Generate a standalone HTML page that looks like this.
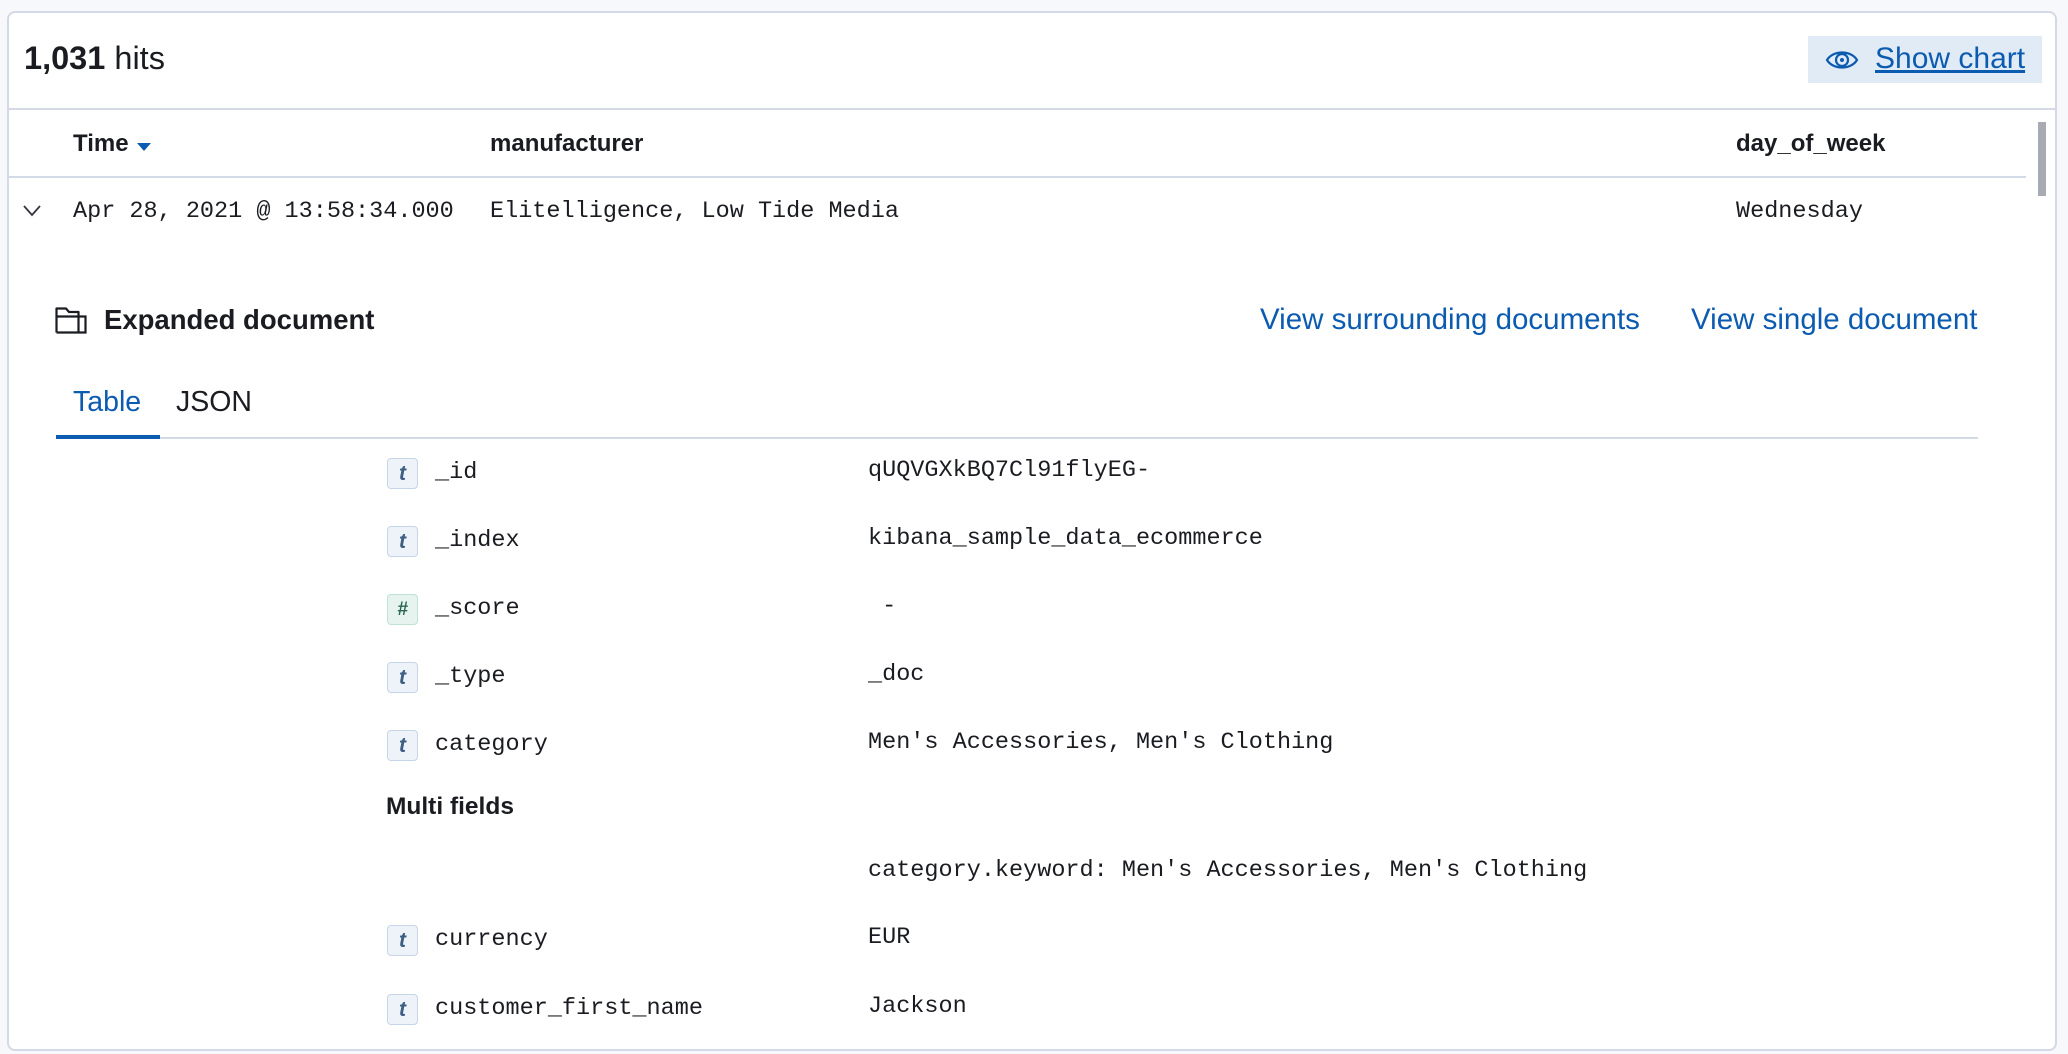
<!DOCTYPE html>
<html><head><meta charset="utf-8"><style>
html,body{margin:0;padding:0;}
body{width:2068px;height:1054px;background:#f7f8fc;position:relative;overflow:hidden;font-family:"Liberation Sans",sans-serif;color:#1a1c21;}
.panel{position:absolute;left:7px;top:11px;width:2050px;height:1040px;background:#fff;border:2px solid #d3dae6;border-radius:8px;box-sizing:border-box;}
.a{position:absolute;white-space:nowrap;}
.mono{font-family:"Liberation Mono",monospace;font-size:23.5px;color:#1a1c21;}
.hline{position:absolute;height:2px;background:#d3dae6;}
.badge{position:absolute;left:387px;width:29px;height:29px;border:1px solid #c6d6e8;background:#eef3f9;border-radius:4px;color:#3d5d83;font-weight:bold;font-style:italic;font-size:21px;text-align:center;line-height:29px;font-family:"Liberation Sans",sans-serif;}
.badge.n{border-color:#bfe2d3;background:#e6f3ee;color:#2c6650;font-size:19px;}
.link{color:#0b5bb0;font-size:29.5px;}
.th{font-size:24px;font-weight:bold;line-height:30px;top:129px;}
</style></head><body>
<div class="panel"></div>
<div class="a" style="left:24px;top:38px;font-size:32.5px;line-height:40px;"><b>1,031</b> hits</div>
<div class="a" style="left:1808px;top:36px;width:234px;height:47px;background:#e0ebf5;"></div>
<svg class="a" style="left:1825px;top:45px" width="34" height="30" viewBox="0 0 34 30"><path d="M2 15 C8 5,26 5,32 15 C26 25,8 25,2 15Z" fill="none" stroke="#0b5bb0" stroke-width="2.2"/><circle cx="17" cy="15" r="6" fill="none" stroke="#0b5bb0" stroke-width="2.2"/><circle cx="17" cy="15" r="2" fill="#0b5bb0"/></svg>
<div class="a link" style="left:1875px;top:40px;font-size:30px;line-height:38px;text-decoration:underline;">Show chart</div>
<div class="hline" style="left:9px;top:108px;width:2048px;"></div>
<div class="a th" style="left:73px;">Time</div>
<svg class="a" style="left:137px;top:143px" width="14" height="10"><path d="M0 0H14L7 8Z" fill="#0b5bb0"/></svg>
<div class="a th" style="left:490px;">manufacturer</div>
<div class="a th" style="left:1736px;">day_of_week</div>
<div class="a" style="left:2038px;top:122px;width:8px;height:74px;background:#a8abb3;"></div>
<div class="hline" style="left:9px;top:176px;width:2017px;"></div>
<svg class="a" style="left:23px;top:205px" width="18" height="12"><path d="M1 1L9 10L17 1" fill="none" stroke="#343741" stroke-width="1.8"/></svg>
<div class="a mono" style="left:73px;top:198px;line-height:28px;">Apr 28, 2021 @ 13:58:34.000</div>
<div class="a mono" style="left:490px;top:198px;line-height:28px;">Elitelligence, Low Tide Media</div>
<div class="a mono" style="left:1736px;top:198px;line-height:28px;">Wednesday</div>
<svg class="a" style="left:55px;top:306px" width="32" height="28" viewBox="0 0 32 28"><path d="M1.5 26.5V2.5H11L14 6H23.5V10.5M1.5 26.5H23.5V10.5H1.5" fill="none" stroke="#1a1c21" stroke-width="2.2" stroke-linejoin="round"/><path d="M23.5 10.5H30.5V26.5H23.5" fill="none" stroke="#1a1c21" stroke-width="2.2"/></svg>
<div class="a" style="left:104px;top:302px;font-size:27.5px;font-weight:bold;line-height:36px;">Expanded document</div>
<div class="a link" style="left:1260px;top:302px;line-height:36px;">View surrounding documents</div>
<div class="a link" style="left:1691px;top:302px;line-height:36px;">View single document</div>
<div class="a" style="left:73px;top:384px;font-size:28.5px;line-height:36px;color:#0b5bb0;">Table</div>
<div class="a" style="left:176px;top:384px;font-size:28.5px;line-height:36px;">JSON</div>
<div class="hline" style="left:56px;top:437px;width:1922px;"></div>
<div class="a" style="left:56px;top:435px;width:104px;height:4px;background:#0b5bb0;"></div>

<div class="badge" style="top:458px">t</div><div class="a mono" style="left:435px;top:459px;line-height:28px;">_id</div><div class="a mono" style="left:868px;top:457px;line-height:28px;">qUQVGXkBQ7Cl91flyEG-</div>
<div class="badge" style="top:526px">t</div><div class="a mono" style="left:435px;top:527px;line-height:28px;">_index</div><div class="a mono" style="left:868px;top:525px;line-height:28px;">kibana_sample_data_ecommerce</div>
<div class="badge n" style="top:594px">#</div><div class="a mono" style="left:435px;top:595px;line-height:28px;">_score</div><div class="a mono" style="left:868px;top:593px;line-height:28px;">&nbsp;-</div>
<div class="badge" style="top:662px">t</div><div class="a mono" style="left:435px;top:663px;line-height:28px;">_type</div><div class="a mono" style="left:868px;top:661px;line-height:28px;">_doc</div>
<div class="badge" style="top:730px">t</div><div class="a mono" style="left:435px;top:731px;line-height:28px;">category</div><div class="a mono" style="left:868px;top:729px;line-height:28px;">Men's Accessories, Men's Clothing</div>
<div class="a" style="left:386px;top:792px;font-size:24.5px;font-weight:bold;line-height:30px;">Multi fields</div>
<div class="a mono" style="left:868px;top:857px;line-height:28px;">category.keyword: Men's Accessories, Men's Clothing</div>
<div class="badge" style="top:925px">t</div><div class="a mono" style="left:435px;top:926px;line-height:28px;">currency</div><div class="a mono" style="left:868px;top:924px;line-height:28px;">EUR</div>
<div class="badge" style="top:994px">t</div><div class="a mono" style="left:435px;top:995px;line-height:28px;">customer_first_name</div><div class="a mono" style="left:868px;top:993px;line-height:28px;">Jackson</div>
</body></html>
